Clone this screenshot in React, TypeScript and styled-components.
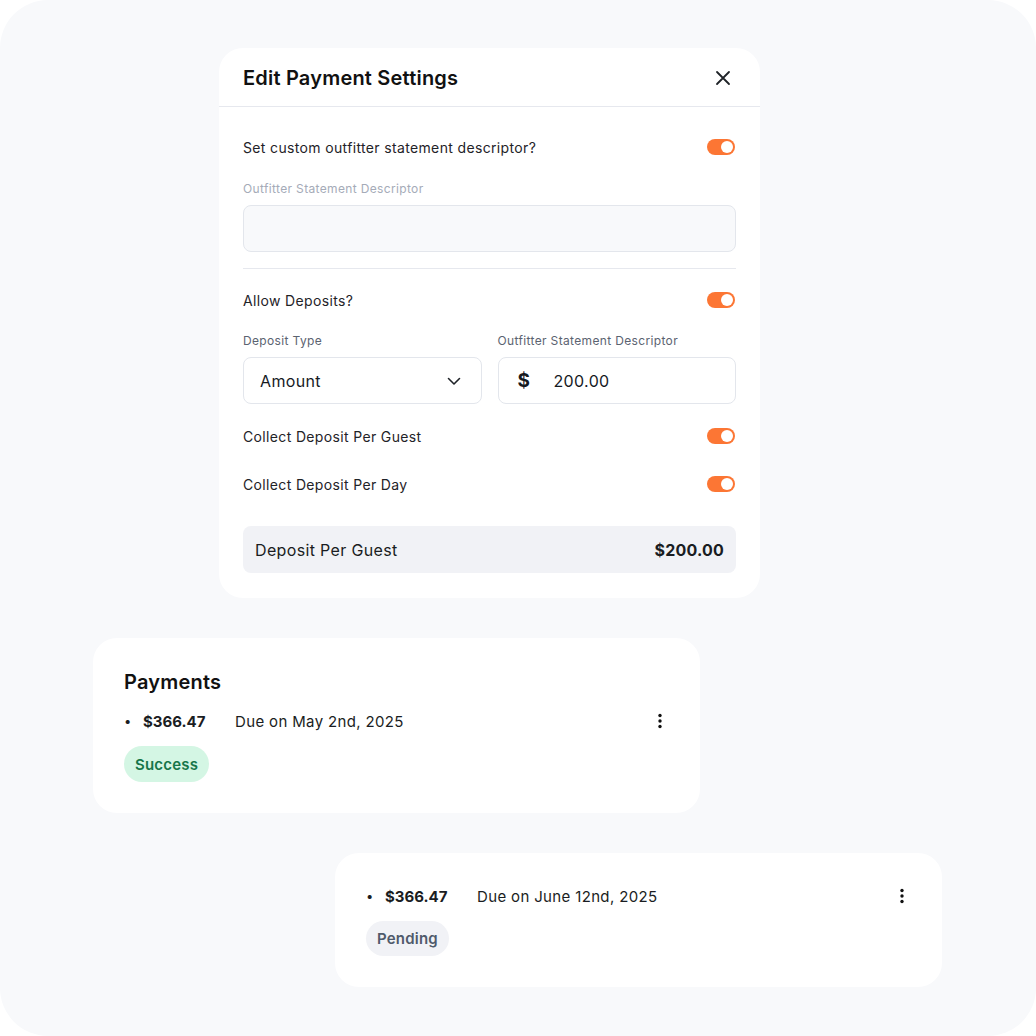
import * as React from 'react';
import styled, { createGlobalStyle } from 'styled-components';

const GlobalStyle = createGlobalStyle`
  html, body {
    margin: 0;
    padding: 0;
    background: #ffffff;
  }
  body {
    font-family: Inter, "Noto Sans", "Liberation Sans", sans-serif;
    color: #111827;
    letter-spacing: 0.35px;
    -webkit-font-smoothing: antialiased;
  }
`;

const Canvas = styled.div`
  width: 1036px;
  height: 1036px;
  box-sizing: border-box;
  background: #f8f9fb;
  border-radius: 48px;
  padding-top: 48px;
  display: flex;
  flex-direction: column;
  gap: 40px;
`;

const Card = styled.div<{ $left: number; $width: number }>`
  margin-left: ${p => p.$left}px;
  width: ${p => p.$width}px;
  box-sizing: border-box;
  background: #ffffff;
  border-radius: 24px;
`;

const ModalHeader = styled.div`
  height: 59px;
  box-sizing: border-box;
  padding: 1px 24px 0;
  display: flex;
  align-items: center;
  justify-content: space-between;
  border-bottom: 1px solid #e6e8ee;
`;

const Title = styled.h2`
  margin: 0;
  font-size: 20px;
  font-weight: 600;
  line-height: 28px;
  letter-spacing: 0.2px;
  color: #111111;
`;

const CloseButton = styled.button`
  width: 24px;
  height: 24px;
  padding: 0;
  margin-right: 1px;
  border: none;
  background: none;
  display: flex;
  align-items: center;
  justify-content: center;
`;

const ModalBody = styled.div`
  padding: 28px 24px 25px;
  display: flex;
  flex-direction: column;
`;

const ToggleRow = styled.div<{ $top?: number }>`
  margin-top: ${p => p.$top ?? 0}px;
  height: 24px;
  display: flex;
  align-items: center;
  justify-content: space-between;
  font-size: 14px;
  color: #1f2328;
`;

const Switch = styled.span`
  width: 28px;
  height: 16px;
  border-radius: 8px;
  background: #fc7634;
  position: relative;
  margin-right: 1px;
  &::after {
    content: '';
    position: absolute;
    top: 2px;
    right: 2px;
    width: 12px;
    height: 12px;
    border-radius: 50%;
    background: #ffffff;
  }
`;

const Field = styled.div<{ $top?: number }>`
  margin-top: ${p => p.$top ?? 0}px;
  display: flex;
  flex-direction: column;
  gap: 8px;
`;

const Label = styled.label<{ $muted?: boolean }>`
  font-size: 12px;
  line-height: 16px;
  color: ${p => (p.$muted ? '#a5abb8' : '#5b6371')};
`;

const InputBox = styled.div<{ $disabled?: boolean }>`
  height: 47px;
  box-sizing: border-box;
  border: 1px solid #e3e6ec;
  border-radius: 8px;
  background: ${p => (p.$disabled ? '#f8f9fb' : '#ffffff')};
  padding: 0 16px;
  display: flex;
  align-items: center;
  font-size: 16px;
  color: #161a1f;
`;

const SelectBox = styled(InputBox)`
  justify-content: space-between;
  padding-right: 19px;
`;

const Dollar = styled.span`
  width: 20px;
  font-size: 19px;
  font-weight: 700;
  margin-left: 3px;
  margin-right: 16px;
`;

const Divider = styled.hr`
  margin: 16px 0 0;
  border: none;
  height: 1px;
  background: #e6e8ee;
`;

const TwoCols = styled.div`
  margin-top: 21px;
  display: grid;
  grid-template-columns: 1fr 1fr;
  gap: 16px;
`;

const Summary = styled.div`
  margin-top: 30px;
  height: 47px;
  border-radius: 8px;
  background: #f1f2f6;
  padding: 0 12px;
  display: flex;
  align-items: center;
  justify-content: space-between;
  font-size: 16px;
  color: #1a1d22;
  strong {
    font-weight: 700;
    letter-spacing: 0.2px;
  }
`;

const PaymentInner = styled.div<{ $top: number }>`
  padding: ${p => p.$top}px 31px 31px;
  display: flex;
  flex-direction: column;
  align-items: flex-start;
`;

const CardTitle = styled.h3`
  margin: 0 0 13px;
  font-size: 20px;
  font-weight: 600;
  line-height: 28px;
  letter-spacing: 0.2px;
  color: #111111;
`;

const PaymentRow = styled.div`
  width: 100%;
  height: 24px;
  display: flex;
  align-items: center;
  font-size: 15px;
  color: #1a1d22;
`;

const Bullet = styled.span`
  width: 19px;
  font-size: 13px;
`;

const Amount = styled.span`
  width: 92px;
  font-weight: 700;
  letter-spacing: 0;
`;

const DueDate = styled.span`
  flex: 1;
`;

const MoreButton = styled.button`
  width: 20px;
  height: 20px;
  padding: 0;
  margin-right: -1px;
  border: none;
  background: none;
  display: flex;
  align-items: center;
  justify-content: center;
`;

const Badge = styled.span<{ $tone: 'success' | 'pending' }>`
  margin-top: 13px;
  height: ${p => (p.$tone === 'success' ? 36 : 35)}px;
  padding: 0 11px;
  border-radius: 18px;
  display: inline-flex;
  align-items: center;
  font-size: 15px;
  font-weight: 600;
  letter-spacing: 0.2px;
  background: ${p => (p.$tone === 'success' ? '#d4f6e4' : '#f1f2f6')};
  color: ${p => (p.$tone === 'success' ? '#17764a' : '#4f5a6b')};
`;

const CloseIcon = () => (
  <svg width="16" height="16" viewBox="0 0 16 16" fill="none">
    <path d="M2 2L14 14M14 2L2 14" stroke="#1f2328" strokeWidth="1.8" strokeLinecap="round" />
  </svg>
);

const ChevronDown = () => (
  <svg width="16" height="16" viewBox="0 0 16 16" fill="none">
    <path d="M2.5 5.5L8 11L13.5 5.5" stroke="#1f2328" strokeWidth="1.6" strokeLinecap="round" strokeLinejoin="round" />
  </svg>
);

const Kebab = () => (
  <svg width="4" height="16" viewBox="0 0 4 16" fill="#111111">
    <circle cx="2" cy="2.5" r="1.7" />
    <circle cx="2" cy="8" r="1.7" />
    <circle cx="2" cy="13.5" r="1.7" />
  </svg>
);

const payments = [
  { amount: '$366.47', due: 'Due on May 2nd, 2025', status: 'success' as const, label: 'Success' },
  { amount: '$366.47', due: 'Due on June 12nd, 2025', status: 'pending' as const, label: 'Pending' },
];

export default function App() {
  return (
    <>
      <GlobalStyle />
      <Canvas>
        <Card $left={219} $width={541}>
          <ModalHeader>
            <Title>Edit Payment Settings</Title>
            <CloseButton aria-label="Close">
              <CloseIcon />
            </CloseButton>
          </ModalHeader>
          <ModalBody>
            <ToggleRow>
              Set custom outfitter statement descriptor?
              <Switch />
            </ToggleRow>
            <Field $top={22}>
              <Label $muted>Outfitter Statement Descriptor</Label>
              <InputBox $disabled />
            </Field>
            <Divider />
            <ToggleRow $top={19}>
              Allow Deposits?
              <Switch />
            </ToggleRow>
            <TwoCols>
              <Field>
                <Label>Deposit Type</Label>
                <SelectBox>
                  Amount
                  <ChevronDown />
                </SelectBox>
              </Field>
              <Field>
                <Label>Outfitter Statement Descriptor</Label>
                <InputBox>
                  <Dollar>$</Dollar>
                  200.00
                </InputBox>
              </Field>
            </TwoCols>
            <ToggleRow $top={20}>
              Collect Deposit Per Guest
              <Switch />
            </ToggleRow>
            <ToggleRow $top={24}>
              Collect Deposit Per Day
              <Switch />
            </ToggleRow>
            <Summary>
              Deposit Per Guest
              <strong>$200.00</strong>
            </Summary>
          </ModalBody>
        </Card>

        <Card $left={93} $width={607}>
          <PaymentInner $top={30}>
            <CardTitle>Payments</CardTitle>
            <PaymentRow>
              <Bullet>•</Bullet>
              <Amount>{payments[0].amount}</Amount>
              <DueDate>{payments[0].due}</DueDate>
              <MoreButton aria-label="More">
                <Kebab />
              </MoreButton>
            </PaymentRow>
            <Badge $tone={payments[0].status}>{payments[0].label}</Badge>
          </PaymentInner>
        </Card>

        <Card $left={335} $width={607}>
          <PaymentInner $top={31}>
            <PaymentRow>
              <Bullet>•</Bullet>
              <Amount>{payments[1].amount}</Amount>
              <DueDate>{payments[1].due}</DueDate>
              <MoreButton aria-label="More">
                <Kebab />
              </MoreButton>
            </PaymentRow>
            <Badge $tone={payments[1].status}>{payments[1].label}</Badge>
          </PaymentInner>
        </Card>
      </Canvas>
    </>
  );
}
